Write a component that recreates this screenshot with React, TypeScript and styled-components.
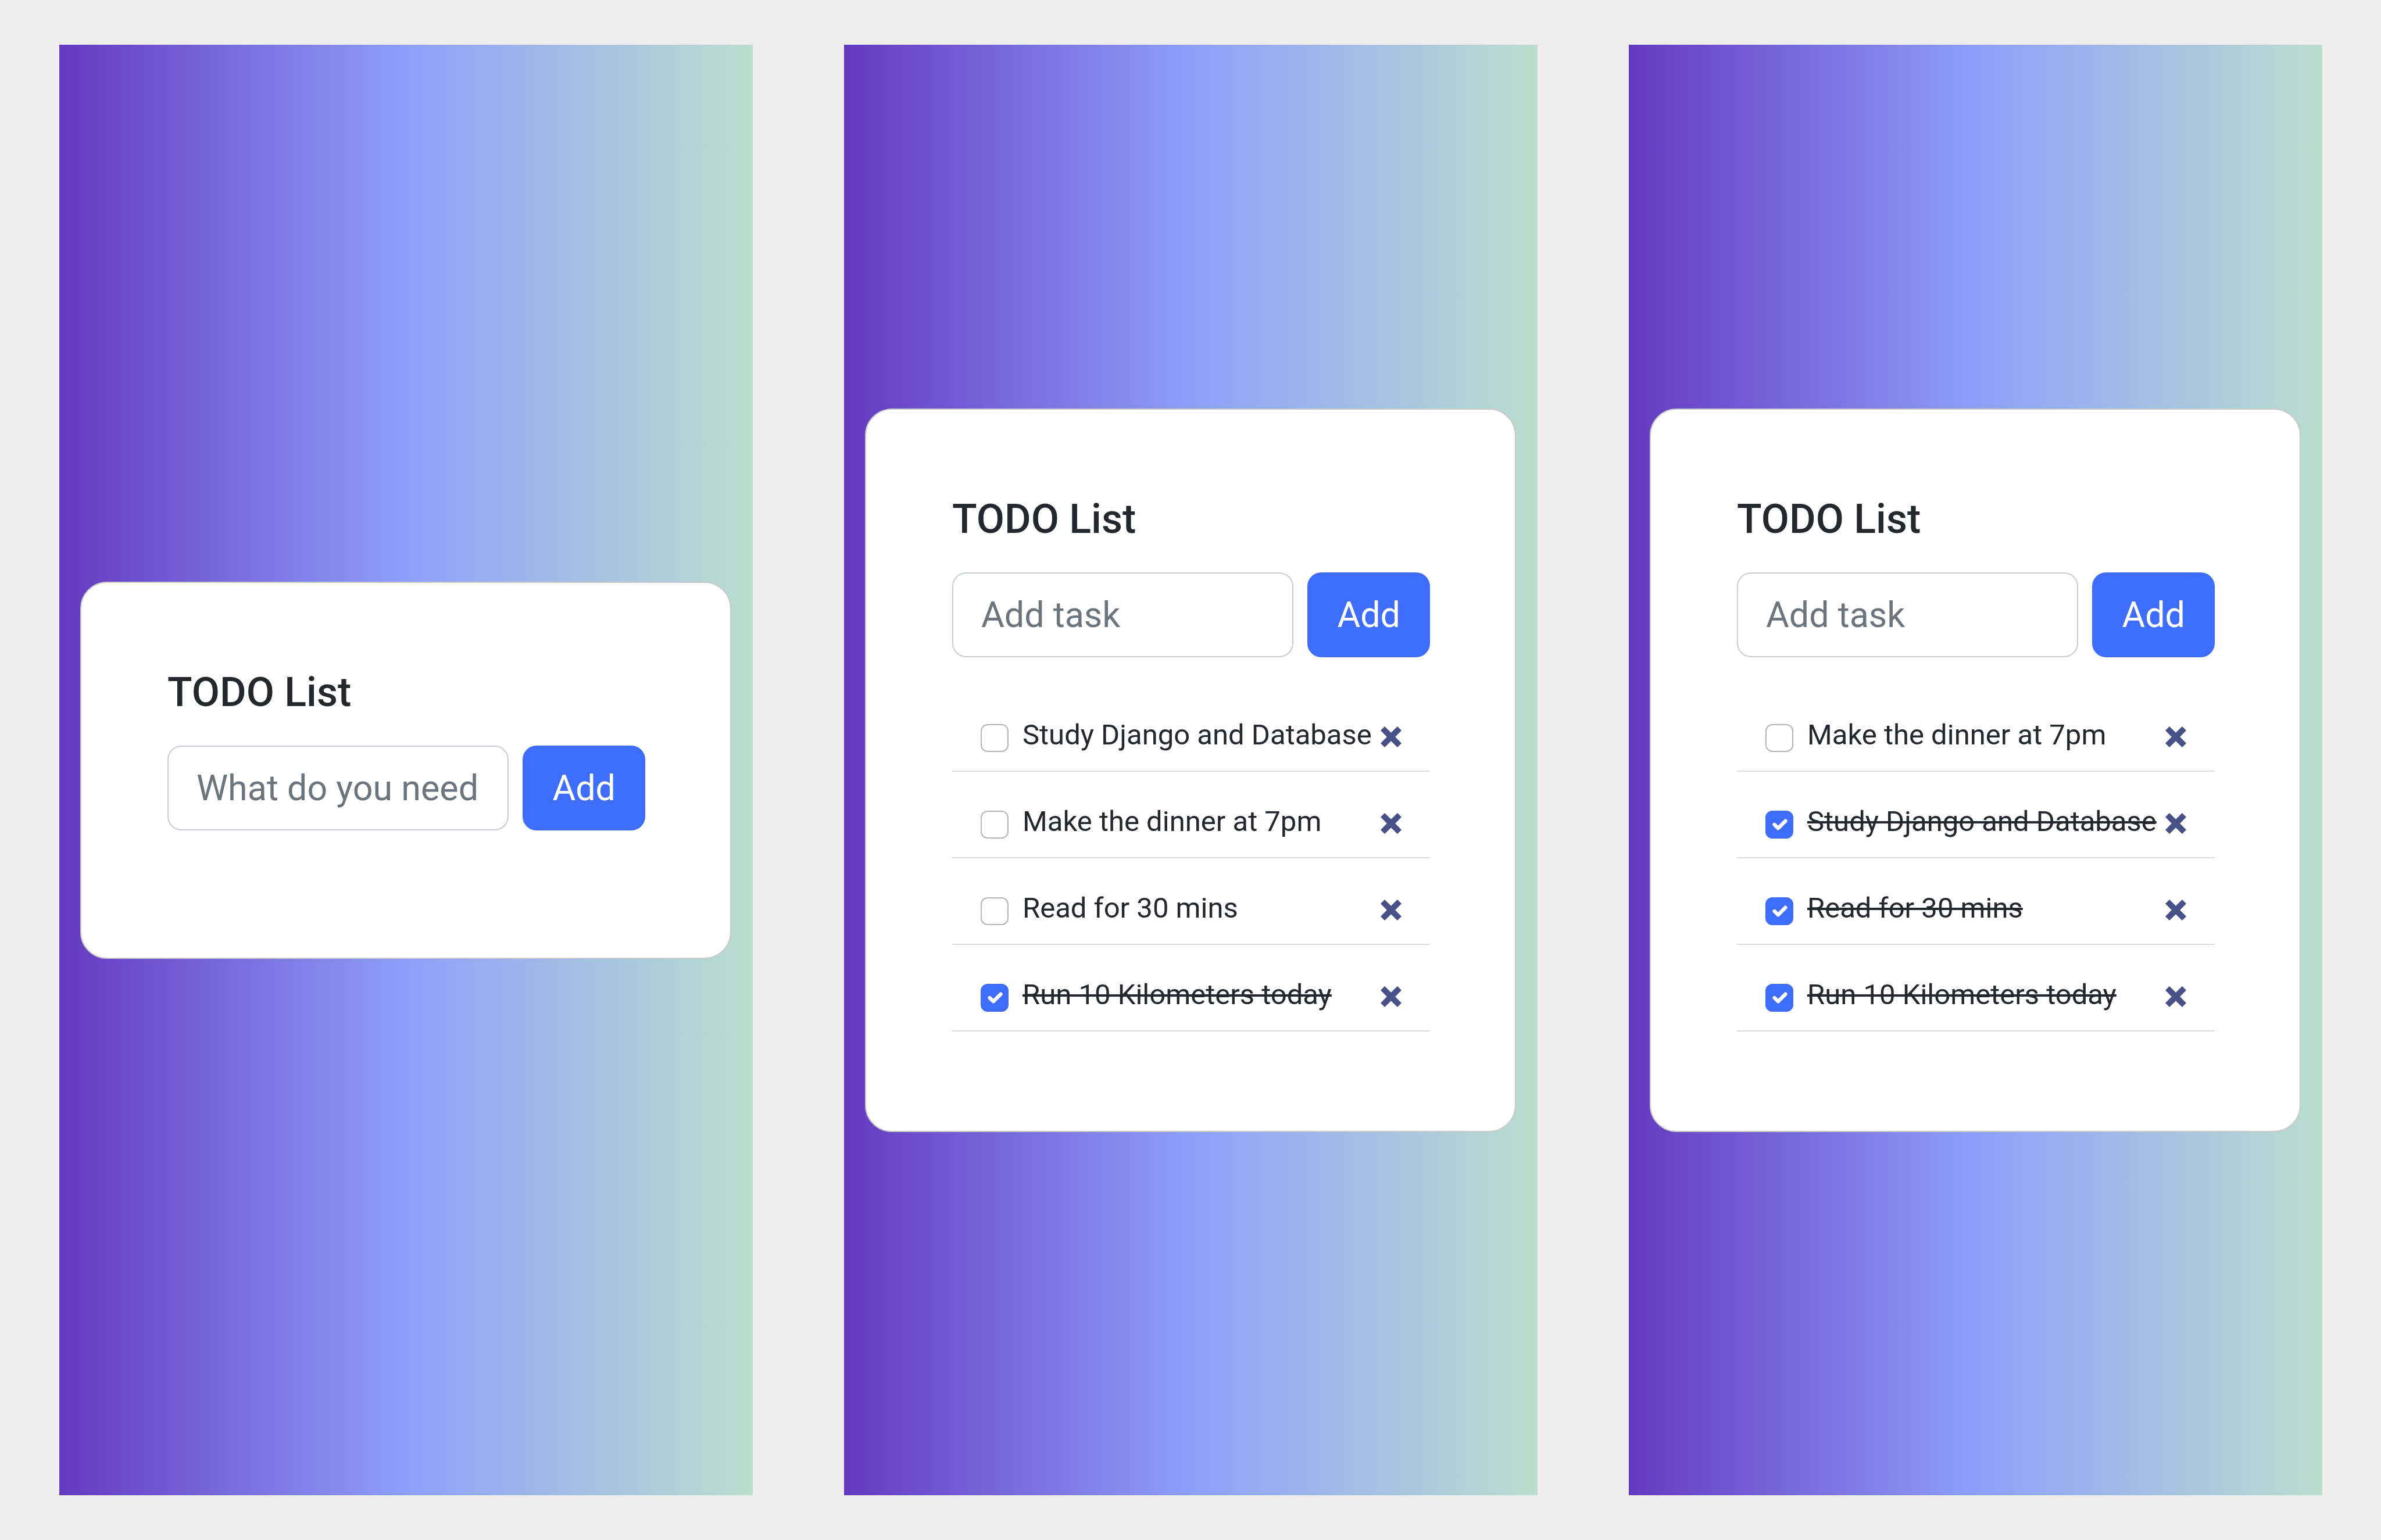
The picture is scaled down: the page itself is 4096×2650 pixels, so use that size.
import React, { useId, useState } from 'react';
import styled, { createGlobalStyle } from 'styled-components';

const GlobalStyle = createGlobalStyle`
  *, *::before, *::after {
    box-sizing: border-box;
  }

  body {
    margin: 0;
    background: #eee;
    color: #24272c;
    font-family: Roboto, "Liberation Sans", sans-serif;
    font-size: 49px;
    line-height: 74px;
  }
`;

const Page = styled.main`
  display: flex;
  gap: 157px;
  min-height: 100vh;
  padding: 77px 101px 77px 102px;
`;

const Screen = styled.section`
  flex: 1 1 0;
  min-width: 0;
  display: flex;
  align-items: center;
  padding: 0 37px 0 36px;
  background: linear-gradient(to right, #6439c0, #8e9ffa 50%, #badfce);
`;

const Card = styled.div`
  flex: 1;
  min-width: 0;
  padding: 146px 146px 171px 148px;
  border: 2px solid #cacaca;
  border-radius: 46px;
  background: #fff;
`;

const Title = styled.h1`
  margin: 0 0 50px;
  font-size: 70px;
  font-weight: 500;
  line-height: 84px;
`;

const TaskForm = styled.form`
  display: flex;
  gap: 24px;
  margin-bottom: 48px;
`;

const TaskInput = styled.input`
  flex: 1;
  min-width: 0;
  height: 146px;
  padding: 0 48px;
  border: 2px solid #c8cdd3;
  border-radius: 24px;
  background: #fff;
  color: inherit;
  font-family: inherit;
  font-size: 61px;

  &::placeholder {
    color: #6c757d;
    opacity: 1;
  }
`;

const AddButton = styled.button`
  height: 146px;
  padding: 0 51px;
  border: 0;
  border-radius: 24px;
  background: #3f6dfb;
  color: #fff;
  font-family: inherit;
  font-size: 61px;
`;

const TaskList = styled.ul`
  margin: 0;
  padding: 0;
  list-style: none;
`;

const TaskRow = styled.li`
  display: flex;
  align-items: flex-start;
  padding: 49px 49px 24px;
  border-bottom: 2px solid #d8dbdf;
`;

const Checkbox = styled.input`
  appearance: none;
  flex: none;
  width: 48px;
  height: 48px;
  margin: 18px 24px 0 0;
  border: 2px solid #b5b5b5;
  border-radius: 12px;
  background: #fff center / 42px no-repeat;

  &:checked {
    border-color: #3f6dfb;
    background-color: #3f6dfb;
    background-image: url("data:image/svg+xml,%3csvg xmlns='http://www.w3.org/2000/svg' viewBox='0 0 20 20'%3e%3cpath fill='none' stroke='%23fff' stroke-linecap='round' stroke-linejoin='round' stroke-width='3' d='m6 10 3 3 6-6'/%3e%3c/svg%3e");
  }
`;

const TaskLabel = styled.label<{ $done: boolean }>`
  flex: 1;
  white-space: nowrap;

  span {
    text-decoration: ${({ $done }) => ($done ? 'line-through' : 'none')};
  }
`;

const DeleteButton = styled.button`
  flex: none;
  display: flex;
  align-items: center;
  height: 74px;
  padding: 6px 0 0;
  border: 0;
  background: none;
  color: #475187;
`;

const CrossIcon = () => (
  <svg width="36" height="36" viewBox="0 0 133 133" fill="currentColor" aria-hidden="true">
    <path d="M26 0 66.500 40 107 0 133 26 93 66.500 133 107 107 133 66.500 93 26 133 0 107 40 66.500 0 26Z" />
  </svg>
);

type Task = { name: string; done: boolean };

const screens: { placeholder: string; tasks: Task[] }[] = [
  { placeholder: 'What do you need', tasks: [] },
  {
    placeholder: 'Add task',
    tasks: [
      { name: 'Study Django and Database', done: false },
      { name: 'Make the dinner at 7pm', done: false },
      { name: 'Read for 30 mins', done: false },
      { name: 'Run 10 Kilometers today', done: true },
    ],
  },
  {
    placeholder: 'Add task',
    tasks: [
      { name: 'Make the dinner at 7pm', done: false },
      { name: 'Study Django and Database', done: true },
      { name: 'Read for 30 mins', done: true },
      { name: 'Run 10 Kilometers today', done: true },
    ],
  },
];

function TodoScreen({ placeholder, tasks: initial }: { placeholder: string; tasks: Task[] }) {
  const id = useId();
  const [tasks, setTasks] = useState(initial);
  const [draft, setDraft] = useState('');

  const add = (event: React.FormEvent) => {
    event.preventDefault();
    if (draft.trim()) {
      setTasks([{ name: draft.trim(), done: false }, ...tasks]);
      setDraft('');
    }
  };
  const toggle = (index: number) =>
    setTasks(tasks.map((task, i) => (i === index ? { ...task, done: !task.done } : task)));
  const remove = (index: number) => setTasks(tasks.filter((_, i) => i !== index));

  return (
    <Screen>
      <Card>
        <Title id={`${id}-title`}>TODO List</Title>
        <TaskForm onSubmit={add}>
          <TaskInput
            type="text"
            aria-labelledby={`${id}-title`}
            placeholder={placeholder}
            value={draft}
            onChange={(event) => setDraft(event.target.value)}
          />
          <AddButton type="submit">Add</AddButton>
        </TaskForm>
        <TaskList>
          {tasks.map((task, index) => (
            <TaskRow key={task.name}>
              <Checkbox
                type="checkbox"
                id={`${id}-${index}`}
                checked={task.done}
                onChange={() => toggle(index)}
              />
              <TaskLabel htmlFor={`${id}-${index}`} $done={task.done}>
                <span>{task.name}</span>
              </TaskLabel>
              <DeleteButton type="button" aria-label={`Delete ${task.name}`} onClick={() => remove(index)}>
                <CrossIcon />
              </DeleteButton>
            </TaskRow>
          ))}
        </TaskList>
      </Card>
    </Screen>
  );
}

export default function App() {
  return (
    <>
      <GlobalStyle />
      <Page>
        {screens.map((screen, index) => (
          <TodoScreen key={index} {...screen} />
        ))}
      </Page>
    </>
  );
}
